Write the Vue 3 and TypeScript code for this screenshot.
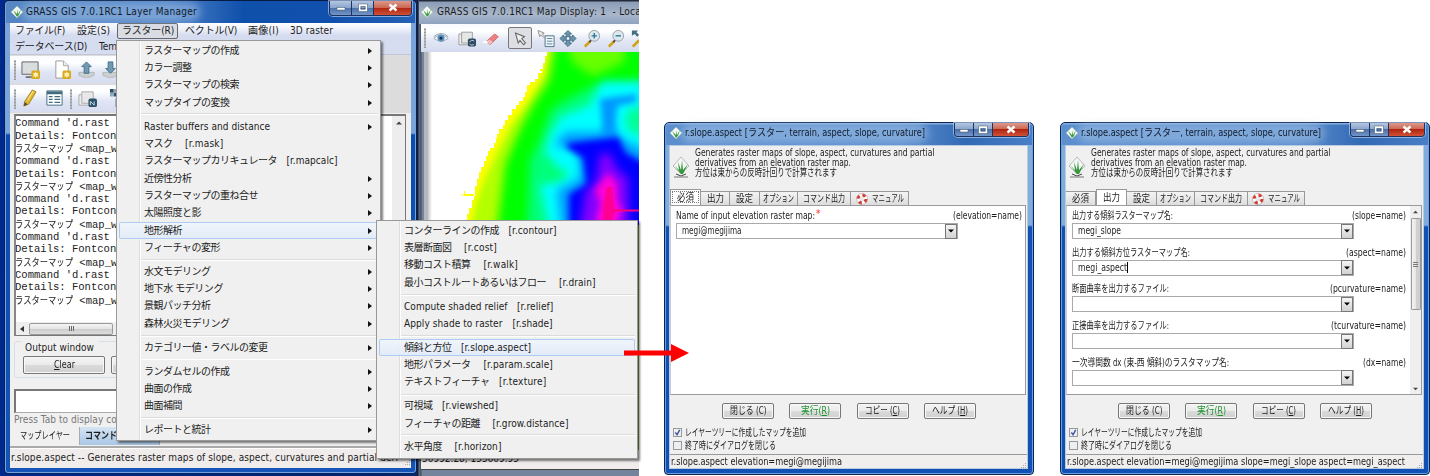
<script setup lang="ts">
interface MenuRow {
  label?: string
  width?: number
  command?: string
  gap?: number
  commandWidth?: number
  arrow?: boolean
  active?: boolean
}
interface Param { label: string; width: number; key: string; keyWidth: number; value?: string; valueWidth?: number; caret?: boolean; required?: boolean }
interface Tab { label: string; width: number }
interface Dialog { id: string; selected: number; params: Param[]; scroll: boolean; status: string; statusWidth: number; tabs: string }

// Fits a run of text to a given advance width: tracking for small differences, narrowing for large ones.
const vFit = {
  mounted(el: HTMLElement, binding: { value: number | undefined }) {
    const target = binding.value
    if (!target) return
    const natural = el.getBoundingClientRect().width
    const count = Array.from(el.textContent ?? '').length
    if (!natural || !count) return
    if (target / natural < 0.93) {
      el.style.transform = `scaleX(${target / natural})`
      el.style.marginRight = `${target - natural}px`
    } else {
      el.style.letterSpacing = `${(target - natural) / count}px`
    }
  },
}

const sep: MenuRow = {}
const sub = (label: string, width: number, active = false): MenuRow => ({ label, width, arrow: true, active })
const cmd = (label: string, width: number, command: string, gap: number, commandWidth: number, active = false): MenuRow =>
  ({ label, width, command, gap, commandWidth, active })

const rasterMenu: MenuRow[] = [
  sub('ラスターマップの作成', 95), sub('カラー調整', 47.5), sub('ラスターマップの検索', 95), sub('マップタイプの変換', 85.5), sep,
  sub('Raster buffers and distance', 126), cmd('マスク', 28.5, '[r.mask]', 12.5, 38.5),
  cmd('ラスターマップカリキュレータ', 133, '[r.mapcalc]', 9.5, 51),
  sub('近傍性分析', 47.5), sub('ラスターマップの重ね合せ', 114), sub('太陽照度と影', 57), sub('地形解析', 38, true), sub('フィーチャの変形', 76), sep,
  sub('水文モデリング', 66.5), sub('地下水 モデリング', 79), sub('景観パッチ分析', 66.5), sub('森林火災モデリング', 85.5), sep,
  sub('カテゴリー値・ラベルの変更', 123.5), sep,
  sub('ランダムセルの作成', 85.5), sub('曲面の作成', 47.5), sub('曲面補間', 38), sep,
  sub('レポートと統計', 66.5),
]
const terrainMenu: MenuRow[] = [
  cmd('コンターラインの作成', 95, '[r.contour]', 9.5, 48), cmd('表層断面図', 47.5, '[r.cost]', 12.5, 33),
  cmd('移動コスト積算', 66.5, '[r.walk]', 13, 34.5), cmd('最小コストルートあるいはフロー', 142, '[r.drain]', 13, 36.5), sep,
  cmd('Compute shaded relief', 103.5, '[r.relief]', 9.5, 36.5), cmd('Apply shade to raster', 98.5, '[r.shade]', 10, 40), sep,
  cmd('傾斜と方位', 47.5, '[r.slope.aspect]', 9.5, 70, true), cmd('地形パラメータ', 66.5, '[r.param.scale]', 13, 69.5),
  cmd('テキストフィーチャ', 85.5, '[r.texture]', 9.5, 47.5), sep,
  cmd('可視域', 28.5, '[r.viewshed]', 9.5, 56), cmd('フィーチャの距離', 76, '[r.grow.distance]', 12.5, 76), sep,
  cmd('水平角度', 38, '[r.horizon]', 12.5, 47),
]

const log: string[] = []
for (let i = 0; i < 5; i++) log.push("Command 'd.rast ", 'Details: Fontcon', 'ラスターマップ')

const tabs: Tab[] = [
  { label: '必須', width: 17 }, { label: '出力', width: 17 }, { label: '設定', width: 17 },
  { label: 'オプション', width: 31 }, { label: 'コマンド出力', width: 42 }, { label: 'マニュアル', width: 32 },
]
const dialogs: Dialog[] = [
  {
    id: 'd1', selected: 0, scroll: false, tabs: 'first', status: 'r.slope.aspect elevation=megi@megijima', statusWidth: 171,
    params: [{ label: 'Name of input elevation raster map:', width: 139, key: '(elevation=name)', keyWidth: 69, value: 'megi@megijima', valueWidth: 59.5, required: true }],
  },
  {
    id: 'd2', selected: 1, scroll: true, tabs: 'second', status: 'r.slope.aspect elevation=megi@megijima slope=megi_slope aspect=megi_aspect', statusWidth: 338,
    params: [
      { label: '出力する傾斜ラスターマップ名:', width: 101, key: '(slope=name)', keyWidth: 54, value: 'megi_slope', valueWidth: 43 },
      { label: '出力する傾斜方位ラスターマップ名:', width: 118, key: '(aspect=name)', keyWidth: 60, value: 'megi_aspect', valueWidth: 49, caret: true },
      { label: '断面曲率を出力するファイル:', width: 97, key: '(pcurvature=name)', keyWidth: 76 },
      { label: '正接曲率を出力するファイル:', width: 97, key: '(tcurvature=name)', keyWidth: 75 },
      { label: '一次導関数 dx (東-西 傾斜)のラスタマップ名:', width: 157, key: '(dx=name)', keyWidth: 43 },
    ],
  },
]
const actions = [
  { text: '閉じる (', key: 'C', width: 36.5, plain: true }, { text: '実行(', key: 'R', width: 29, run: true },
  { text: 'コピー (', key: 'C', width: 35 }, { text: 'ヘルプ (', key: 'H', width: 36 },
]
</script>

<template>
  <div class="screen">
    <div class="desktop"></div>

    <section class="mapwin">
      <header class="maptitle">
        <svg class="logo" viewBox="0 0 12 12"><path d="M6 0 12 6 6 12 0 6z" fill="#f4f8f4" stroke="#9ba" stroke-width=".6"/><path d="M6 11 2 4 6 8V3l1 5 3-5-2 6z" fill="#3c9a40"/></svg>
        <span v-fit="204" class="t">GRASS GIS 7.0.1RC1 Map Display: 1&nbsp; - Loca</span>
      </header>
      <div class="maptools">
        <i class="grip"></i>
        <svg viewBox="0 0 20 20"><path d="M2 10Q10 2 18 10 10 16 2 10z" fill="#f4f6f8" stroke="#9aacba"/><circle cx="10" cy="9.5" r="4" fill="#5e93bd"/><circle cx="10" cy="9.5" r="1.8" fill="#18374d"/><path d="M2 8Q10 1 18 8" fill="none" stroke="#8296a6"/></svg>
        <svg viewBox="0 0 20 20"><path d="M4 5H1v12h12v-2" fill="#eee" stroke="#999"/><path d="M4 3h12v12H4z" fill="#e5e7e5" stroke="#999"/><rect x="11" y="10" width="9" height="9" rx="2" fill="#2b4960"/><path d="M13 14a3 3 0 0 1 5-1m0 3a3 3 0 0 1-5 0" fill="none" stroke="#cde"/></svg>
        <svg viewBox="0 0 20 20"><path d="m4 13 9-8 4 3-9 9z" fill="#ef8080" stroke="#c96b6b"/><path d="m4 13 3-2 4 3-3 3z" fill="#f8bdbd"/><path d="M0 14h5" stroke="#fff" stroke-width="2"/></svg>
        <b class="pressed"><svg viewBox="0 0 20 20"><path d="m5 4 10 4-3 2 4 5-2 2-4-5-2 3z" fill="#eee" stroke="#666" stroke-width="1.2"/></svg></b>
        <svg viewBox="0 0 20 20"><path d="M9 7h10v12H9z" fill="#eef4f7" stroke="#466b80"/><path d="M11 10h6m-6 3h6m-6 3h6" stroke="#577f94"/><path d="m1 1 7 3-2 1 3 3-1 1-4-3-1 2z" fill="#eee" stroke="#777" stroke-width=".8"/></svg>
        <svg viewBox="0 0 20 20"><g fill="#6b94aa" stroke="#315d76" stroke-width=".8"><path d="m10 1 4 4h-2v3H8V5H6z"/><path d="m10 19 4-4h-2v-3H8v3H6z"/><path d="m1 10 4-4v2h3v4H5v2z"/><path d="m19 10-4-4v2h-3v4h3v2z"/></g></svg>
        <svg viewBox="0 0 20 20"><path d="m2 19 6-6" stroke="#d0a018" stroke-width="3"/><path d="m7 14 3-3" stroke="#444" stroke-width="2"/><circle cx="12.5" cy="7" r="6" fill="#dce7ee" stroke="#909ba1"/><path d="M12.500 4v6m-3-3h6" stroke="#28759b" stroke-width="1.500"/></svg>
        <svg viewBox="0 0 20 20"><path d="m2 19 6-6" stroke="#d0a018" stroke-width="3"/><path d="m7 14 3-3" stroke="#444" stroke-width="2"/><circle cx="12.500" cy="7" r="6" fill="#dce7ee" stroke="#909ba1"/><path d="M9.500 7h6" stroke="#28759b" stroke-width="1.500"/></svg>
        <svg viewBox="0 0 20 20"><path d="M1 1h7L6 3l3 3-2 2-3-3-3 2z" fill="#456e84"/><path d="m2 19 7-7" stroke="#d0a018" stroke-width="3"/></svg>
      </div>
      <svg class="map" viewBox="428 52 211 398" preserveAspectRatio="none">
        <defs>
          <clipPath id="land"><path d="M547 52V56H545V63H543V69H540V71H542V73H538V79H535V82H530V85H527V92H525V97H523V101H519V105H516V109H512V115H508V120H505V125H503V129H499V134H497V138H496V143H494V148H490V151H488V156H486V161H484V167H481V172H479V179H477V186H475V196H463V194H461V195H464V191H465V194H474V200H472V208H469V214H467V222H465V450H640V52Z"/></clipPath>
          <filter id="b1" x="-30%" y="-30%" width="160%" height="160%"><feGaussianBlur stdDeviation="3"/></filter>
          <filter id="b2" x="-30%" y="-30%" width="160%" height="160%"><feGaussianBlur stdDeviation="5"/></filter>
          <linearGradient id="edge" x1="0" x2="1"><stop offset="0" stop-color="#c8c8c8"/><stop offset="1" stop-color="#fff"/></linearGradient>
        </defs>
        <rect x="428" y="52" width="211" height="398" fill="#fff"/>
        <rect x="428" y="52" width="4" height="398" fill="url(#edge)"/>
        <g clip-path="url(#land)">
          <rect x="428" y="52" width="212" height="400" fill="#ff0"/>
          <path d="M552 40 545 75 527 105 511 125 500 146 486 176 477 200 470 230 500 450H660V40z" fill="#b4ff00" filter="url(#b1)"/>
          <path d="M556 40 549 80 533 105 522 125 513 145 505 165 497 230V450H660V40z" fill="#0f0" filter="url(#b2)"/>
          <path d="M565 40 573 63 593 76 625 62 624 40z" fill="#68ff00" filter="url(#b2)"/>
          <path d="M660 76 630 83 598 84 567 99 551 110 540 140 530 160 527 230H660z" fill="#00ff78" filter="url(#b2)"/>
          <path d="M660 82 602 82 590 105 560 117 550 135 545 153 556 165 540 185 550 235H660z" fill="#0ff" filter="url(#b2)"/>
          <path d="M548 164 568 172 563 181 535 184z" fill="#00ff70" filter="url(#b2)"/>
          <path d="M628 110 645 106 645 134 633 134 625 124z" fill="#00ff90" filter="url(#b2)"/>
          <path d="M600 99 636 94 636 102 617 106 614 145 604 145z" fill="#0098ff" filter="url(#b1)"/>
          <path d="M559 138 567 132 600 132 612 126 620 137 645 151V232H562L557 190 580 178 579 159 574 149 556 146z" fill="#009cff" filter="url(#b2)"/>
          <path d="M568 143 618 137 626 153 645 163V232H569L569 194 586 184 583 158 566 147z" fill="#00f" filter="url(#b1)"/>
          <path d="M600 153 611 155 616 168 628 178 629 232H579L586 190 596 182z" fill="#8500ff" filter="url(#b2)"/>
          <path d="M608 173 617 183 618 202 622 207 617 230H594L600 203 595 190z" fill="#ff00d8" filter="url(#b1)"/>
          <path d="M607 187 612 187 615 212 610 225 603 220 603 206z" fill="#ff0096"/>
          <path d="M612 210.500h28" stroke="#ff0078" stroke-width="2"/>
          <path d="M638 450V225" stroke="#76a33a" stroke-width="4"/>
        </g>
      </svg>
      <footer class="mapstatus"><span v-fit="97" class="t">50992.28, 155609.95</span></footer>
    </section>

    <section class="manager">
      <header class="wintitle">
        <svg class="logo" viewBox="0 0 12 12"><path d="M6 0 12 6 6 12 0 6z" fill="#f4f8f4" stroke="#9ba" stroke-width=".6"/><path d="M6 11 2 4 6 8V3l1 5 3-5-2 6z" fill="#3c9a40"/></svg>
        <span class="glow"><span v-fit="171" class="t">GRASS GIS 7.0.1RC1 Layer Manager</span></span>
        <div class="winbtns"><i><svg viewBox="0 0 10 10"><rect x="1" y="4.500" width="8" height="2.500" fill="#fff" stroke="#456" stroke-width=".5"/></svg></i><i><svg viewBox="0 0 10 10"><path d="M1.500 2h7v5.500h-7z" fill="none" stroke="#fff" stroke-width="1.800"/><path d="M.5 1h9v7.500h-9zM3 3.500h4v2.500H3z" fill="none" stroke="#456" stroke-width=".5"/></svg></i><i class="close"><svg viewBox="0 0 10 10"><path d="m1.500 1.500 7 6m0-6-7 6" stroke="#fff" stroke-width="2.400"/></svg></i></div>
      </header>
      <div class="client">
        <nav class="menubar">
          <div class="mrow r1">
            <span v-fit="50" class="t">ファイル(F)</span><span v-fit="33" class="t">設定(S)</span>
            <b class="open"><span v-fit="52" class="t">ラスター(R)</span></b>
            <span v-fit="52" class="t">ベクトル(V)</span><span v-fit="31" class="t">画像(I)</span><span v-fit="43" class="t">3D raster</span>
          </div>
          <div class="mrow r2"><span v-fit="72" class="t">データベース(D)</span><span class="t">Temporal</span></div>
        </nav>
        <div class="tools">
          <div class="bar one"><i class="grip"></i>
            <svg viewBox="0 0 20 20"><path d="M1 2h17v13H1z" fill="#d9dddd" stroke="#666"/><path d="M5 18h9" stroke="#777" stroke-width="2"/><rect x="11" y="11" width="9" height="9" rx="1.500" fill="#d9aa20"/><path d="m15.500 12 1 2 2-.5-1 2 1 2-2-.5-1 2-1-2-2 .5 1-2-1-2 2 .5z" fill="#fff3ae"/></svg>
            <svg viewBox="0 0 20 20"><path d="M3 1h8l5 5v13H3z" fill="#fff" stroke="#999"/><path d="M11 1v5h5" fill="#eee" stroke="#aaa"/><rect x="10" y="11" width="9" height="9" rx="1.500" fill="#d9aa20"/><path d="m14.500 12 1 2 2-.5-1 2 1 2-2-.5-1 2-1-2-2 .5 1-2-1-2 2 .5z" fill="#fff3ae"/></svg>
            <svg viewBox="0 0 20 20"><path d="M2 13v3q8 5 16 0v-3z" fill="#ccd0d0" stroke="#b2b7b7"/><path d="m10 2 5 5h-2.500v7h-5V7H5z" fill="#6f9ab1" stroke="#44708a"/></svg>
            <svg viewBox="0 0 20 20"><path d="M2 13v3q8 5 16 0v-3z" fill="#ccd0d0" stroke="#b2b7b7"/><path d="m10 14 5-5h-2.500V2h-5v7H5z" fill="#6f9ab1" stroke="#44708a"/></svg>
          </div>
          <div class="bar two"><i class="grip"></i>
            <svg viewBox="0 0 20 20"><path d="m4 18 1-5L13 1l4 2-8 13z" fill="#e2b82e" stroke="#a18427"/><path d="m4 18 1-4 3 2z" fill="#444"/><path d="m8 12 6-10" stroke="#fff09a"/></svg>
            <svg viewBox="0 0 20 20"><path d="M2 2h16v15H2z" fill="#fff" stroke="#416b7e"/><path d="M2 4h16" stroke="#416b7e" stroke-width="3"/><path d="M4 8h4m2 0h6M4 11h4m2 0h6M4 14h4m2 0h6" stroke="#416b7e" stroke-width="1.300"/></svg>
            <i class="grip"></i>
            <svg viewBox="0 0 20 20"><path d="M4 6H1v11h12v-2" fill="#eee" stroke="#aaa"/><path d="M4 3h12v12H4z" fill="#e8e8e8" stroke="#aaa"/><rect x="11" y="10" width="9" height="9" rx="2" fill="#2b5268"/><path d="M13 17v-4l4 4v-4" fill="none" stroke="#cde"/></svg>
            <svg viewBox="0 0 20 20"><path d="M1 0h4v4H1zM5 4h4v4H5zM9 0h8v8H9zM7 10h10v9H7z" fill="#315061"/><path d="M5 0h4v4H5zM1 4h4v4H1z" fill="#8caaba"/></svg>
          </div>
        </div>
        <div class="console">
          <div class="log">
            <div class="lines"><div v-for="(l, i) in log" :key="i" class="line"><template v-if="i % 3 === 2"><span v-fit="58" class="t jp">{{ l }}</span><span> &lt;map_w</span></template><template v-else>{{ l }}</template></div></div>
            <div class="vbar"><svg viewBox="0 0 6 4"><path d="M0 3.500 3 .5l3 3z" fill="#444"/></svg></div>
          </div>
          <div class="hbar"><svg viewBox="0 0 4 6"><path d="M4 0v6L0 3z" fill="#333"/></svg><b><i></i><i></i><i></i></b></div>
        </div>
        <div class="group"><span class="legend"><span v-fit="69" class="t">Output window</span></span><div class="gbtns"><b class="btn"><span v-fit="21" class="t"><u>C</u>lear</span></b><b class="btn"></b></div></div>
        <div class="prompt"></div>
        <div class="hint"><span v-fit="160" class="t">Press Tab to display command help</span></div>
        <div class="booktabs"><b><span v-fit="50" class="t">マップレイヤー</span></b><b class="cur"><span v-fit="48" class="t">コマンド出力</span></b><i></i></div>
        <footer class="mstatus"><span v-fit="387" class="t">r.slope.aspect -- Generates raster maps of slope, aspect, curvatures and partial deri</span><svg class="sizer" viewBox="0 0 6 6"><path d="M5 0h1v1H5zM3 2h1v1H3zM5 2h1v1H5zM1 4h1v1H1zM3 4h1v1H3zM5 4h1v1H5z" fill="#aaa"/></svg></footer>
      </div>
    </section>

    <div class="menu main">
      <template v-for="(m, i) in rasterMenu" :key="i">
        <div v-if="!m.label" class="sep"></div>
        <div v-else class="item" :class="{ active: m.active }"><span v-fit="m.width" class="t">{{ m.label }}</span><span v-if="m.command" class="cmd" :style="{ marginLeft: m.gap + 'px' }"><span v-fit="m.commandWidth" class="t">{{ m.command }}</span></span><svg v-if="m.arrow" class="arr" viewBox="0 0 4 6"><path d="M0 0v6l4-3z" fill="#111"/></svg></div>
      </template>
    </div>
    <div class="menu terrain">
      <template v-for="(m, i) in terrainMenu" :key="i">
        <div v-if="!m.label" class="sep"></div>
        <div v-else class="item" :class="{ active: m.active }"><span v-fit="m.width" class="t">{{ m.label }}</span><span class="cmd" :style="{ marginLeft: m.gap + 'px' }"><span v-fit="m.commandWidth" class="t">{{ m.command }}</span></span></div>
      </template>
    </div>

    <section v-for="d in dialogs" :key="d.id" class="dialog" :class="d.id">
      <header class="wintitle">
        <svg class="logo" viewBox="0 0 12 12"><path d="M6 0 12 6 6 12 0 6z" fill="#f4f8f4" stroke="#9ba" stroke-width=".6"/><path d="M6 11 2 4 6 8V3l1 5 3-5-2 6z" fill="#3c9a40"/></svg>
        <span class="glow"><span v-fit="240" class="t">r.slope.aspect [ラスター, terrain, aspect, slope, curvature]</span></span>
        <div class="winbtns"><i><svg viewBox="0 0 10 10"><rect x="1" y="4.500" width="8" height="2.500" fill="#fff" stroke="#456" stroke-width=".5"/></svg></i><i><svg viewBox="0 0 10 10"><path d="M1.500 2h7v5.500h-7z" fill="none" stroke="#fff" stroke-width="1.800"/><path d="M.5 1h9v7.500h-9zM3 3.500h4v2.500H3z" fill="none" stroke="#456" stroke-width=".5"/></svg></i><i class="close"><svg viewBox="0 0 10 10"><path d="m1.500 1.500 7 6m0-6-7 6" stroke="#fff" stroke-width="2.400"/></svg></i></div>
      </header>
      <div class="dclient">
        <div class="about">
          <svg viewBox="0 0 18 22"><path d="M9 1 17 10 9 18 1 10z" fill="#f7f7f7" stroke="#aaa" stroke-width=".8"/><path d="M9 18 2 9l5 5-1-8 3 8 1-10 1 10 5-6-5 10z" fill="#34983c"/><path d="M4 18 9 20l5-2" stroke="#444" fill="none"/><path d="M2 21h14" stroke="#777"/></svg>
          <p><span v-fit="239.500" class="t">Generates raster maps of slope, aspect, curvatures and partial</span><span v-fit="156" class="t">derivatives from an elevation raster map.</span><span v-fit="142" class="t">方位は東からの反時計回りで計算されます</span></p>
        </div>
        <div class="tabs" :class="d.tabs">
          <b v-for="(t, i) in tabs" :key="t.label" :class="{ on: i === d.selected, focus: i === d.selected && i === 0 }"><svg v-if="i === 5" viewBox="0 0 12 12"><circle cx="6" cy="6" r="4" fill="none" stroke="#fff" stroke-width="3"/><circle cx="6" cy="6" r="4" fill="none" stroke="#d23a30" stroke-width="3" stroke-dasharray="3.14 3.14"/><circle cx="6" cy="6" r="5.500" fill="none" stroke="#a88" stroke-width=".5"/></svg><span v-fit="t.width" class="t">{{ t.label }}</span></b>
        </div>
        <div class="panel">
          <div class="fields">
            <div v-for="p in d.params" :key="p.key" class="field">
              <div class="cap"><span v-fit="p.width" class="t">{{ p.label }}</span><em v-if="p.required">*</em><span class="key"><span v-fit="p.keyWidth" class="t">{{ p.key }}</span></span></div>
              <div class="combo"><span v-if="p.value" v-fit="p.valueWidth" class="t">{{ p.value }}</span><i v-if="p.caret" class="caret"></i><b><svg viewBox="0 0 6 4"><path d="M0 .5h6L3 3.500z" fill="#000"/></svg></b></div>
            </div>
          </div>
          <div v-if="d.scroll" class="pscroll"><svg viewBox="0 0 6 4"><path d="M0 3.500 3 .5l3 3z" fill="#444"/></svg><b><i></i><i></i><i></i></b><svg class="down" viewBox="0 0 6 4"><path d="M0 .5h6l-3 3z" fill="#444"/></svg></div>
        </div>
        <div class="actions"><b v-for="a in actions" :key="a.text" class="btn" :class="{ run: a.run, plain: a.plain }"><span v-fit="a.width" class="t">{{ a.text }}<u>{{ a.key }}</u>)</span></b></div>
        <div class="check"><i class="ticked"><svg viewBox="0 0 8 8"><path d="M1.500 4 3.500 6.500 6.500 1" fill="none" stroke="#4056a0" stroke-width="1.600"/></svg></i><span v-fit="121" class="t">レイヤーツリーに作成したマップを追加</span></div>
        <div class="check"><i></i><span v-fit="91" class="t">終了時にダイアログを閉じる</span></div>
        <footer class="dstatus"><span v-fit="d.statusWidth" class="t">{{ d.status }}</span><svg class="sizer" viewBox="0 0 6 6"><path d="M5 0h1v1H5zM3 2h1v1H3zM5 2h1v1H5zM1 4h1v1H1zM3 4h1v1H3zM5 4h1v1H5z" fill="#aaa"/></svg></footer>
      </div>
    </section>

    <svg class="pointer" viewBox="0 0 66 18"><path d="M0 6.500h47V0l18 9-18 9v-6.500H0z" fill="#f00"/></svg>
  </div>
</template>

<style>
body { margin: 0; background: #fff; overflow: hidden; }
</style>
<style scoped>
.screen { position: relative; width: 1430px; height: 476px; overflow: hidden; background: #fff; color: #1c1c1c; font: 10px/14px "DejaVu Sans Condensed", "DejaVu Sans", "Noto Sans CJK JP", sans-serif; }
.screen * { box-sizing: border-box; }
b, i, em { font-weight: normal; font-style: normal; }
svg { display: block; flex: none; }
.t { display: inline-block; white-space: pre; transform-origin: 0 50%; flex: none; }
.desktop { position: absolute; left: 0; top: 0; width: 639px; height: 476px; background: linear-gradient(90deg, #00298c, #00226e 60%, #44536b); }

.mapwin { position: absolute; left: 417px; top: 0; width: 222px; height: 476px; padding-left: 4px; overflow: hidden; background: linear-gradient(90deg, #161e2c 0 1px, #657389 2px, #414c5e 4px, #74849c 5px); display: flex; flex-direction: column; }
.maptitle { height: 24px; margin-left: -2px; padding: 0 0 1px 2px; flex: none; display: flex; align-items: center; gap: 4px; background: linear-gradient(#222b3b 0 1px, #8b9cb5 2px, #a9b7cb 60%, #8fa2bf); white-space: nowrap; }
.logo { width: 12px; height: 12px; }
.maptools { height: 28px; flex: none; display: grid; grid-template-columns: 11px 26px 25px 25px 29px 22px 24px 24px 24px 20px; align-items: center; background: linear-gradient(#f8f9fd, #fff 25%, #e2e7f5 60%, #d4daee); overflow: hidden; }
.maptools svg { width: 18px; height: 19px; }
.maptools .grip { margin-left: 2px; }
.grip { width: 4px; height: 20px; background: radial-gradient(circle at 2px 1.5px, #999 1px, transparent 1.3px) 0 0 / 4px 3px; }
.pressed { width: 24px; height: 22px; border: 1px solid #777; border-radius: 2px; background: #dedfe5; display: flex; align-items: center; justify-content: center; }
.map { width: 211px; height: 398px; margin-left: 7px; box-shadow: -4px 0 0 0 #b4b8be; }
.mapstatus { height: 19px; flex: none; background: #f0ecec; padding: 2px 0 0 1px; box-shadow: 0 1px 0 #444; }

.manager { position: absolute; left: 4px; top: 0; width: 413px; height: 474px; padding: 0 5px 5px 6px; border: 1px solid #06205c; border-top: 1px solid #061a44; border-radius: 5px 5px 4px 4px; background: linear-gradient(#7ba4d7 0, #7aa5da 132px, #0c4cae 134px, #1354b6); display: flex; flex-direction: column; box-shadow: inset 0 0 0 1px #6fa3e1; }
.wintitle { flex: none; display: flex; align-items: center; position: relative; gap: 3px; }
.manager .wintitle { height: 22px; margin: 0 -4px 0 -5px; padding: 0 4px 0 5px; border-radius: 4px 4px 0 0; background: linear-gradient(90deg, #5687c4, #4f82c6 40%, #0f50ab 58%, #1151ad 80%, #2461b6); }
.glow { background: rgba(180, 207, 238, .4); box-shadow: 0 0 7px 4px rgba(180, 207, 238, .4); border-radius: 8px; height: 12px; line-height: 12px; color: #101b2b; white-space: nowrap; }
.winbtns { position: absolute; right: 3px; top: 0; display: flex; height: 15px; border: 1px solid #1b335e; border-top: 0; border-radius: 0 0 4px 4px; overflow: hidden; box-shadow: 0 0 0 1px rgba(200, 220, 250, .6); }
.winbtns i { width: 22px; height: 14px; display: flex; align-items: center; justify-content: center; border-right: 1px solid #1b335e; background: linear-gradient(#b4c7e0, #8aa5cc 48%, #4c70a8 50%, #7296c8); }
.winbtns i.close { width: 37px; border: 0; background: linear-gradient(#dc9a8d, #cc6651 48%, #b02510 50%, #d15238); }
.winbtns svg { width: 10px; height: 10px; }
.client { flex: 1; background: #f0f0f0; display: flex; flex-direction: column; overflow: hidden; margin-left: -1px; }
.menubar { height: 32px; flex: none; background: linear-gradient(#fff, #eef1fa 20%, #d5dcf0 40%, #d6ddf1); border-bottom: 1px solid #c1c7d8; }
.mrow { height: 16px; display: flex; align-items: center; white-space: nowrap; padding-left: 5px; gap: 12px; }
.r1 { gap: 0; }
.r1 > .t:nth-child(2) { margin-left: 12px; }
.r1 > .t:nth-child(4) { margin-left: 7px; }
.r1 > .t:nth-child(5), .r1 > .t:nth-child(6) { margin-left: 11px; }
.open { width: 61px; height: 16px; margin-left: 7px; border: 1px solid #666; border-radius: 2px; background: #dadce4; display: flex; align-items: center; padding-left: 4px; }
.tools { height: 58px; flex: none; background: #dcdcdc; display: flex; flex-direction: column; gap: 2px; padding-top: 1px; }
.bar { height: 27px; width: 250px; display: grid; align-items: center; padding-left: 3px; background: linear-gradient(#fafbfe, #fff 25%, #dfe5f4 60%, #d7ddf0); }
.bar svg { width: 19px; height: 19px; }
.one { grid-template-columns: 8px 32px 24px 24px 24px; }
.two { grid-template-columns: 7px 25px 24px 9px 31px 20px; }
.console { height: 222px; flex: none; margin: 1px 5px 0 4px; border: 1px solid #777; border-top: 2px solid #777; border-left: 2px solid #888; background: #fff; display: flex; flex-direction: column; }
.log { flex: 1; display: flex; overflow: hidden; }
.lines { flex: 1; padding-top: 1px; margin-left: -1px; font-family: "Liberation Mono", monospace; font-size: 10.55px; overflow: hidden; }
.line { height: 12.65px; line-height: 12.65px; white-space: pre; }
.jp { font-family: "Noto Sans CJK JP", sans-serif; font-size: 10px; line-height: 12px; }
.vbar { width: 13px; background: #ededed; display: flex; justify-content: center; padding-top: 5px; }
.vbar svg { width: 6px; height: 4px; }
.hbar { height: 13px; background: #eee; display: flex; align-items: center; padding-left: 4px; gap: 5px; }
.hbar svg { width: 4px; height: 6px; }
.hbar b { width: 84px; height: 12px; border: 1px solid #999; border-radius: 2px; background: linear-gradient(#f5f5f5, #e3e3e3 48%, #ccc 50%, #ddd); display: flex; gap: 1px; align-items: center; justify-content: center; }
.hbar b i { width: 1px; height: 5px; background: #666; }
.group { height: 37px; flex: none; margin: 5px 7px 0 4px; border: 1px solid #d5dfe5; border-radius: 3px; padding: 0 8px; }
.legend { display: block; width: 78px; height: 14px; margin: -1px 0 0 -2px; padding-left: 4px; background: #f0f0f0; white-space: nowrap; }
.gbtns { display: flex; gap: 6px; margin-top: 1px; }
.btn { border: 1px solid #777; border-radius: 2px; background: linear-gradient(#f4f4f4, #ebebeb 48%, #dbdbdb 50%, #d0d0d0); display: flex; align-items: center; justify-content: center; box-shadow: inset 0 0 0 1px #f8f8f8; }
.gbtns .btn { width: 82px; height: 18px; flex: none; }
.prompt { height: 24px; flex: none; margin: 11px 5px 0 4px; border: 1px solid #aaa; border-top: 2px solid #777; border-left: 2px solid #777; background: #fff; }
.hint { height: 14px; flex: none; color: #777; padding-left: 4px; white-space: nowrap; }
.booktabs { height: 21px; flex: none; display: flex; border-bottom: 2px solid #aaa; align-items: flex-start; }
.booktabs b { width: 70px; height: 18px; border-right: 1px solid #aaa; display: flex; align-items: center; justify-content: center; }
.booktabs .cur { width: 80px; background: linear-gradient(#d5e5f5, #a9c6e4); font-weight: bold; justify-content: flex-start; padding-left: 5px; }
.mstatus { flex: 1; display: flex; background: #f0ecec; border-top: 1px solid #fff; padding: 1px 1px 2px; align-items: center; position: relative; }
.sizer { width: 6px; height: 6px; margin-left: auto; align-self: flex-end; }

.menu { position: absolute; border: 1px solid #999; background: linear-gradient(90deg, transparent 22px, #dedede 22px 23px, #fff 23px 24px, transparent 24px), #f0f0f0; box-shadow: 2px 2px 2px rgba(0, 0, 0, .5); }
.main { left: 116px; top: 40px; width: 265px; height: 401px; padding: 1px 2px; }
.terrain { left: 376px; top: 220px; width: 262px; height: 239px; padding: 1px 2px; }
.item { height: 17.350px; display: flex; align-items: center; padding-left: 24px; border: 1px solid transparent; border-radius: 2px; white-space: nowrap; }
.item.active { border-color: #aeccf1; background: linear-gradient(rgba(240, 245, 252, .9), rgba(224, 234, 247, .9)); }
.sep { height: 6.500px; margin-left: 22px; background: linear-gradient(transparent 2.500px, #dcdcdc 2.500px 3.500px, #fff 3.500px 4.500px, transparent 4.500px); }
.cmd { display: flex; }
.arr { width: 4px; height: 6px; margin-left: auto; margin-right: 5px; }

.dialog { position: absolute; top: 122px; width: 370px; height: 353px; border: 1px solid #0b2452; border-radius: 5px 5px 4px 4px; padding: 0 5px 5px 4px; background: linear-gradient(#80acdf 0, #80acdf 102px, #1150b4 104px, #1150b4); box-shadow: inset 0 0 0 1px #68a0e0; display: flex; flex-direction: column; }
.d1 { left: 664px; }
.d2 { left: 1060px; }
.dialog .wintitle { height: 22px; margin: 0 -4px 0 -3px; padding: 0 4px 2px 4px; background: linear-gradient(#86aede 0 1px, transparent 2px), linear-gradient(90deg, #5d8fce, #5b8ecd 65%, #3269b4 82%, #4a7fc8); border-radius: 4px 4px 0 0; }
.dialog .winbtns { height: 14px; }
.dialog .winbtns i { width: 19px; height: 13px; }
.dialog .winbtns i.close { width: 35px; }
.dclient { flex: 1; background: #f0f0f0; border: 1px solid #b9cbe0; display: flex; flex-direction: column; overflow: hidden; }
.about { height: 43px; flex: none; display: flex; padding: 2px 0 0 2px; gap: 5px; }
.about > svg { width: 18px; height: 22px; margin-top: 8px; }
.about p { margin: 0; display: flex; flex-direction: column; align-items: flex-start; white-space: nowrap; }
.about p .t { height: 10px; line-height: 10px; }
.tabs { height: 16px; flex: none; display: grid; align-items: end; }
.first { grid-template-columns: 31px 29px 30px 38px 53px 58px; }
.second { grid-template-columns: 29.500px 31px 30px 38px 53px 57px; }
.tabs b { height: 14px; border: 1px solid #999; border-left-width: 0; border-bottom: 0; background: linear-gradient(#f3f3f3, #e9e9e9 50%, #dcdcdc); display: flex; align-items: center; justify-content: center; gap: 4px; white-space: nowrap; overflow: hidden; }
.tabs b.on { height: 16px; background: #fff; border-left-width: 1px; }
.tabs b.focus { outline: 1px dotted #777; outline-offset: -3px; }
.tabs svg { width: 12px; height: 12px; }
.panel { height: 190px; flex: none; border: 1px solid #9a9aa0; border-left-color: #ccc; background: #fff; display: flex; overflow: hidden; margin-right: 1px; }
.fields { flex: 1; padding: 3px 3px 0 5px; }
.d2 .fields { padding-right: 4px; }
.field { height: 36.700px; }
.cap { height: 14px; display: flex; align-items: center; white-space: nowrap; }
.cap em { color: #f33; height: 16px; line-height: 12px; margin-left: 1px; }
.key { margin-left: auto; display: flex; }
.combo { width: 282px; height: 16px; border: 1px solid #aaa; display: flex; align-items: center; padding-left: 5px; background: #fff; }
.combo b { width: 12px; height: 15px; margin-left: auto; border: 1px solid #777; background: linear-gradient(#f4f4f4, #d2d2d2); display: flex; align-items: center; justify-content: center; }
.combo svg { width: 6px; height: 4px; }
.caret { width: 1px; height: 11px; background: #000; }
.pscroll { width: 11px; background: #efefef; display: flex; flex-direction: column; align-items: center; padding: 4px 0 3px; }
.pscroll svg { width: 5px; height: 4px; }
.pscroll b { width: 10px; height: 92px; margin-top: 4px; border: 1px solid #999; border-radius: 1px; background: linear-gradient(90deg, #f4f4f4, #e5e5e5 50%, #d0d0d0 52%); display: flex; flex-direction: column; gap: 1px; align-items: center; justify-content: center; }
.pscroll b i { width: 5px; height: 1px; background: #777; }
.pscroll .down { margin-top: auto; }
.actions { flex: none; height: 31px; display: flex; padding: 8px 0 0 52px; gap: 15.300px; }
.actions .btn { width: 52px; height: 16px; white-space: nowrap; }
.plain u { text-decoration: none; }
.run { color: #209230; }
.check { height: 13px; flex: none; display: flex; align-items: center; gap: 3px; padding-left: 3px; white-space: nowrap; }
.check i { width: 9px; height: 9px; border: 1px solid #999; background: #edf0f3; }
.check i svg { width: 7px; height: 7px; }
.dstatus { flex: 1; margin-top: 2px; border-top: 1px solid #999; background: #f1eeee; display: flex; align-items: center; padding: 0 1px; white-space: nowrap; }
.pointer { position: absolute; left: 624px; top: 344px; width: 66px; height: 18px; }
</style>
